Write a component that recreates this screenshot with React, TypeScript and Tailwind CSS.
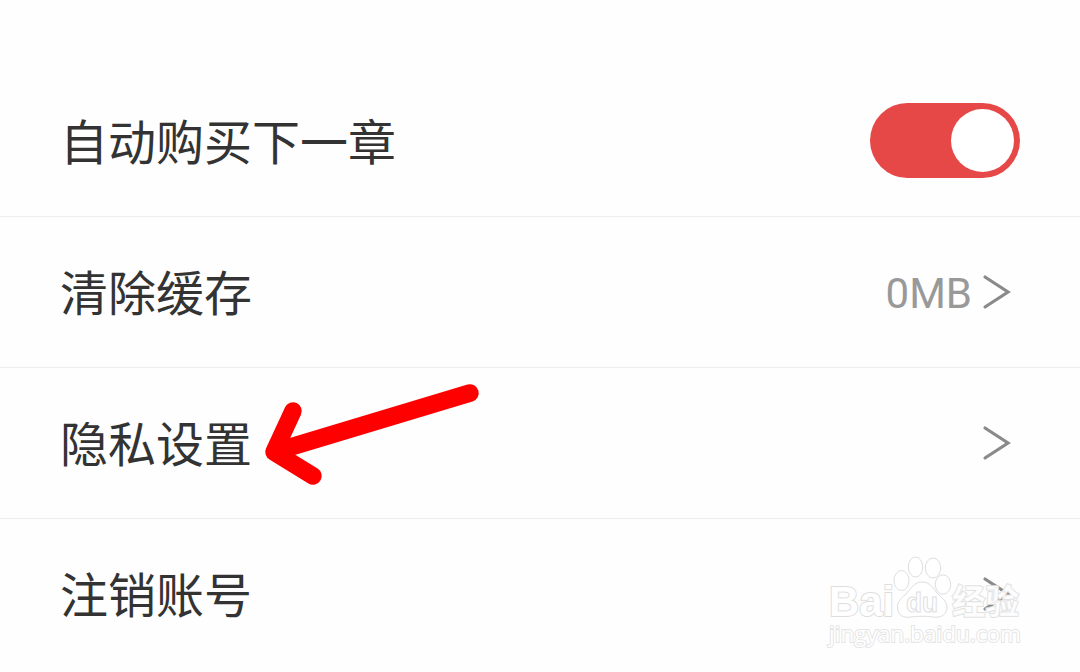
import { useState } from 'react';

type RowProps = {
    title: string;
    children: React.ReactNode;
};

function Row({ title, children }: RowProps) {
    return (
        <div className="flex h-[151px] items-center justify-between border-b border-[#ededed] pb-px pl-[60px] last:border-transparent">
            <span className="pb-[4px] text-[48px] leading-none text-[#333333]">{title}</span>
            {children}
        </div>
    );
}

function Chevron() {
    return (
        <svg className="h-10 w-8" viewBox="0 0 32 40" fill="none">
            <path d="M5 5L28 20L5 35" stroke="#8a8a8a" strokeWidth="3.2" strokeLinecap="round" />
        </svg>
    );
}

function Arrow() {
    return (
        <svg className="absolute left-[250px] top-[375px] h-[120px] w-[240px]" viewBox="250 375 240 120" fill="none">
            <path d="M470 393L274 452M293 411L274 452L313 476" stroke="#fe0000" strokeWidth="17.5" strokeLinecap="round" strokeLinejoin="round" />
        </svg>
    );
}

function Watermark() {
    return (
        <svg
            className="absolute left-[815px] top-[545px] h-[115px] w-[220px]"
            viewBox="815 545 220 115"
            fill="#ffffff"
            stroke="#dedede"
            strokeWidth="1"
            fontFamily="'Liberation Sans', sans-serif"
            fontWeight="bold"
        >
            <text x="829" y="616" fontSize="42" strokeWidth="2" paintOrder="stroke" textLength="65" lengthAdjust="spacingAndGlyphs">Bai</text>
            <ellipse cx="901.5" cy="580.5" rx="7.5" ry="10" />
            <ellipse cx="915.5" cy="567" rx="7.2" ry="10" />
            <ellipse cx="933" cy="568" rx="7.7" ry="10" />
            <ellipse cx="943" cy="584.5" rx="7.7" ry="9.7" />
            <path d="M922 582C915 582 911 588 907 593C902 598 897 601 897.500 608C898 616 904 618 911 617C918 616 926 616 933 617C941 618 946 615 947 608C947 601 942 598 937 593C933 588 930 582 922 582Z" />
            <text x="906" y="612" fontSize="27" strokeWidth="1" textLength="32" lengthAdjust="spacingAndGlyphs">du</text>
            <text x="952" y="614" fontSize="34" strokeWidth="2" paintOrder="stroke" fillOpacity="0.85" strokeOpacity="0.9" fontFamily="'Noto Sans CJK SC', sans-serif" textLength="67" lengthAdjust="spacingAndGlyphs">经验</text>
            <text x="829" y="642" fontSize="21.5" stroke="#e4e4e4" strokeWidth="1.8" paintOrder="stroke" fontFamily="'Open Sans', sans-serif" fontWeight="500" textLength="192" lengthAdjust="spacingAndGlyphs">jingyan.baidu.com</text>
        </svg>
    );
}

function App() {
    const [autoBuy, setAutoBuy] = useState<boolean>(true);

    return (
        <div className="relative h-[672px] w-full overflow-hidden bg-[#fefefe] pt-[66px] font-['Noto_Sans_CJK_SC',sans-serif]">
            <div>
                <Row title="自动购买下一章">
                    <button
                        type="button"
                        role="switch"
                        aria-checked={autoBuy}
                        onClick={() => setAutoBuy(!autoBuy)}
                        className={`mr-[60px] flex h-[75px] w-[150px] items-center rounded-full px-[6px] ${autoBuy ? 'justify-end bg-[#e64747]' : 'justify-start bg-gray-300'}`}
                    >
                        <span className="size-[63px] rounded-full bg-white" />
                    </button>
                </Row>
                <Row title="清除缓存">
                    <div className="mr-[68px] flex items-center gap-2">
                        <span className="pt-[4px] font-['Roboto',sans-serif] text-[42px] leading-none text-[#999999]">0MB</span>
                        <Chevron />
                    </div>
                </Row>
                <Row title="隐私设置">
                    <div className="mr-[68px] flex">
                        <Chevron />
                    </div>
                </Row>
                <Row title="注销账号">
                    <div className="mr-[68px] flex">
                        <Chevron />
                    </div>
                </Row>
            </div>
            <Arrow />
            <Watermark />
        </div>
    );
}

export default App;
